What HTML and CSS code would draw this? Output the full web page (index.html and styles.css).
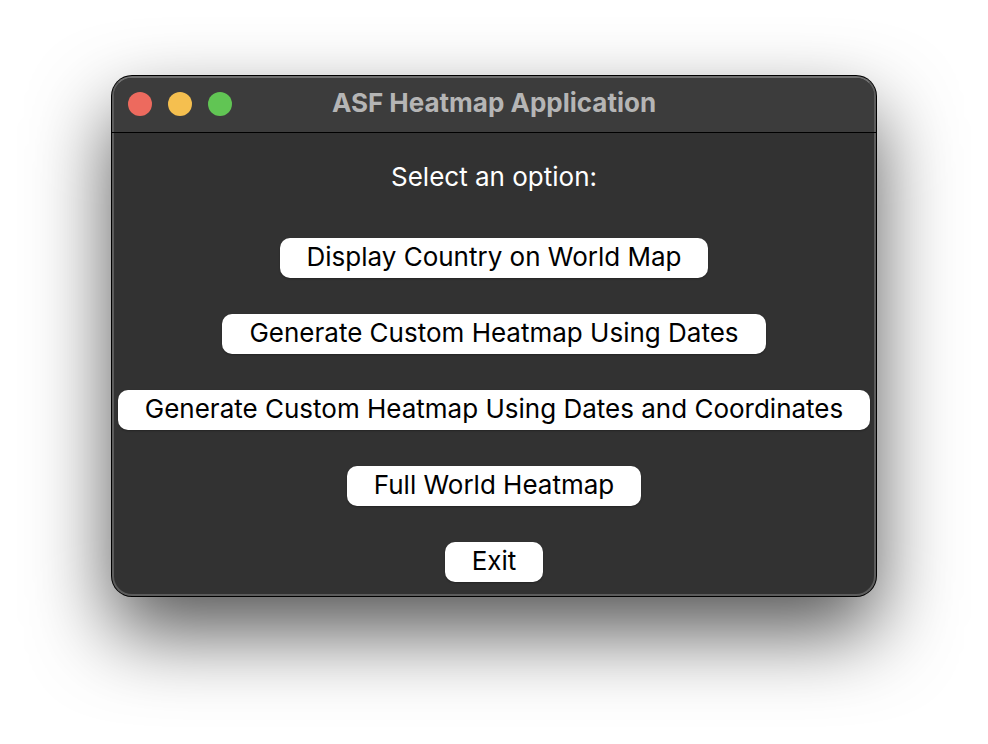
FILE: index.html
```html
<!DOCTYPE html>
<html lang="en">
<head>
<meta charset="utf-8">
<title>ASF Heatmap Application</title>
<link rel="stylesheet" href="styles.css">
</head>
<body>
<main class="window">
  <header class="titlebar">
    <div class="controls">
      <button class="light close" type="button" aria-label="Close"></button>
      <button class="light minimize" type="button" aria-label="Minimize"></button>
      <button class="light zoom" type="button" aria-label="Zoom"></button>
    </div>
    <h1 class="title">ASF Heatmap Application</h1>
  </header>
  <section class="content">
    <p class="prompt">Select an option:</p>
    <button class="option" type="button">Display Country on World Map</button>
    <button class="option" type="button">Generate Custom Heatmap Using Dates</button>
    <button class="option" type="button">Generate Custom Heatmap Using Dates and Coordinates</button>
    <button class="option" type="button">Full World Heatmap</button>
    <button class="option" type="button">Exit</button>
  </section>
</main>
</body>
</html>
```
FILE: styles.css
```css
* {
  box-sizing: border-box;
}

body {
  min-height: 100vh;
  margin: 0;
  padding: 76px 112px;
  background: #fff;
  font-family: Inter, "Liberation Sans", sans-serif;
}

.window {
  border: 2px solid #5c5c5c;
  border-top-color: #707070;
  border-radius: 20px;
  background: #323232;
  box-shadow: 0 0 0 1px #000, 0 36px 80px rgba(0, 0, 0, 0.67);
}

.titlebar {
  position: relative;
  display: grid;
  grid-template-columns: 1fr auto 1fr;
  align-items: center;
  height: 55px;
  padding: 0 14px 3px;
  border-radius: 18px 18px 0 0;
  background: #3c3c3c;
}

/* Divider runs across the window's side borders. */
.titlebar::after {
  content: "";
  position: absolute;
  right: -2px;
  bottom: 0;
  left: -2px;
  height: 1px;
  background: #000;
}

.controls {
  display: flex;
  gap: 16px;
}

.light {
  width: 24px;
  height: 24px;
  padding: 0;
  border: 0;
  border-radius: 50%;
}

.close {
  background: #ed6a5e;
}

.minimize {
  background: #f5bf4f;
}

.zoom {
  background: #61c554;
}

.title {
  margin: 0;
  padding-bottom: 2px;
  color: #b5b5b5;
  font-size: 26px;
  font-weight: 700;
  line-height: 32px;
}

.content {
  display: flex;
  flex-direction: column;
  align-items: center;
  gap: 36px;
  padding: 28px 4px 12px;
}

.prompt {
  margin: 0;
  padding-bottom: 9px;
  color: #fff;
  font-size: 26px;
  line-height: 32px;
}

.option {
  height: 40px;
  padding: 0 27px 2px;
  border: 0;
  border-radius: 10px;
  background: #fff;
  box-shadow: 0 1px 2px rgba(0, 0, 0, 0.3);
  color: #000;
  font-family: inherit;
  font-size: 26px;
  line-height: 32px;
  white-space: nowrap;
}
```
